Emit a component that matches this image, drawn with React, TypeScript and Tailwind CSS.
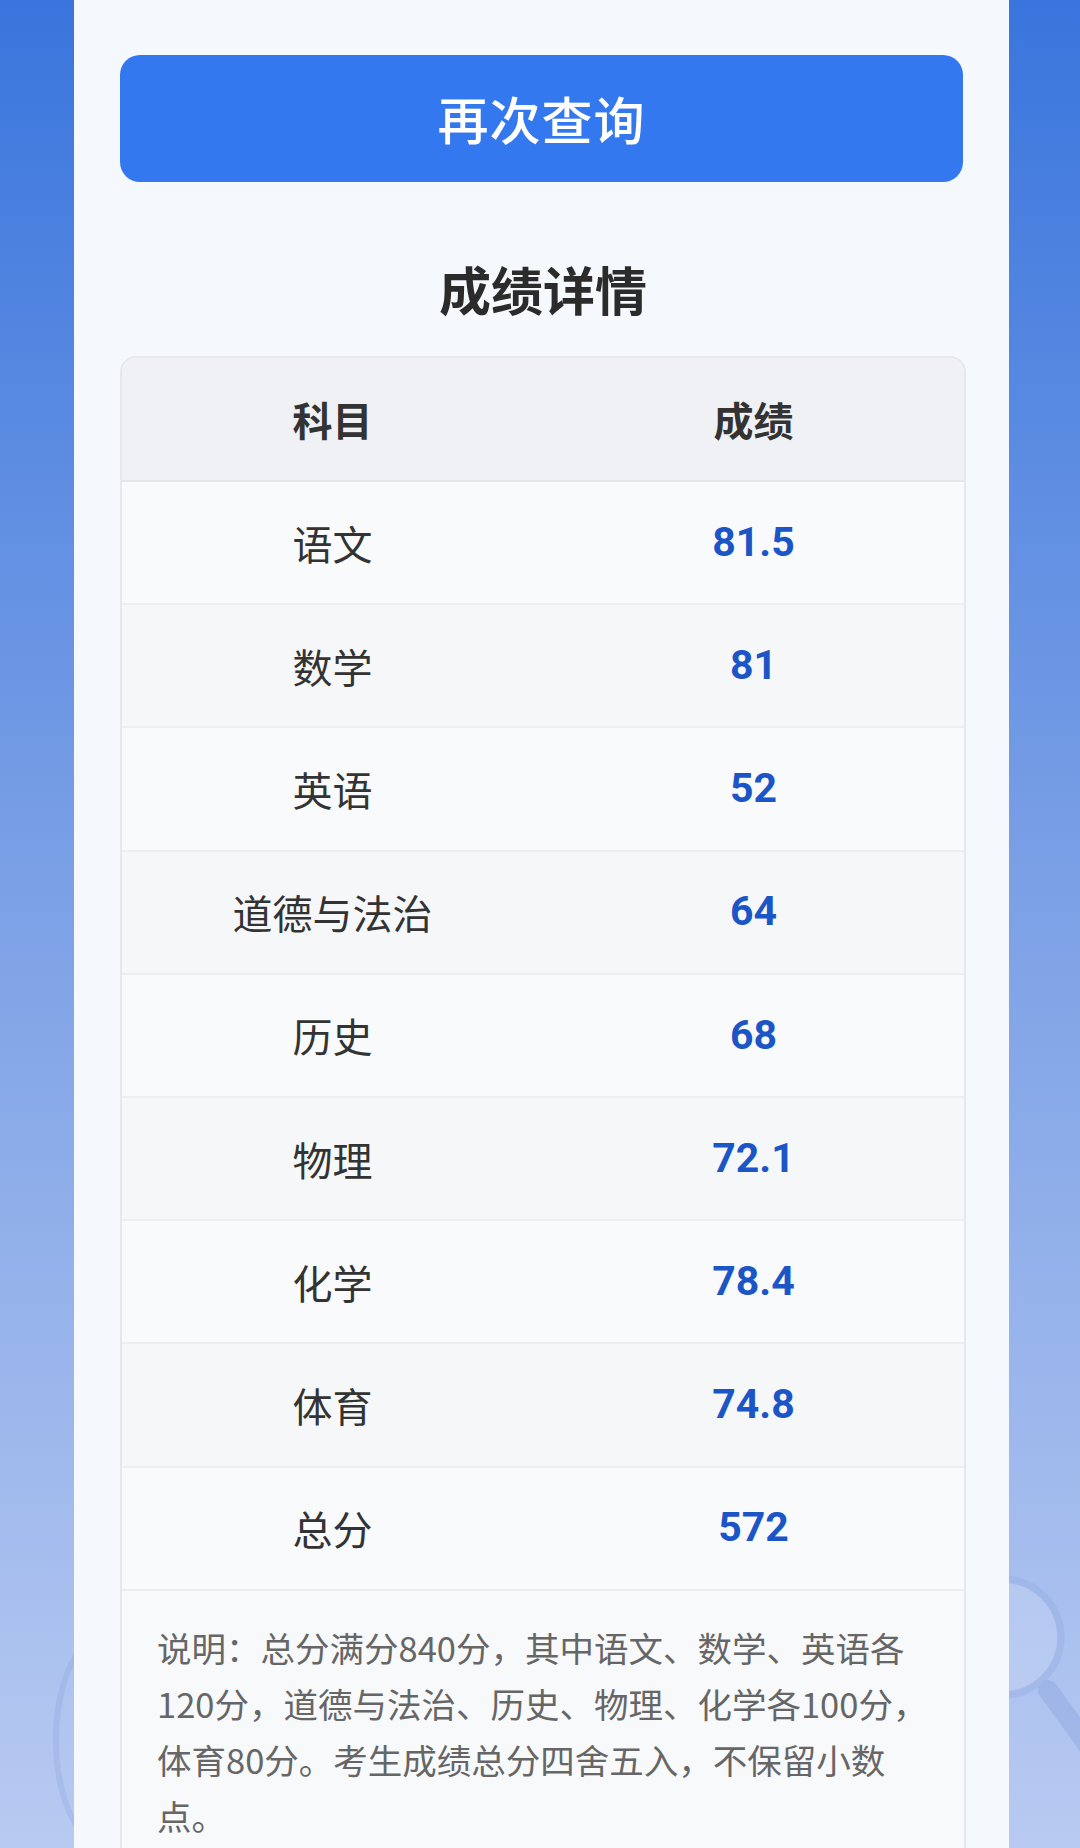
import React from "react";

type Score = { subject: string; score: string };

const scores: Score[] = [
  { subject: "语文", score: "81.5" },
  { subject: "数学", score: "81" },
  { subject: "英语", score: "52" },
  { subject: "道德与法治", score: "64" },
  { subject: "历史", score: "68" },
  { subject: "物理", score: "72.1" },
  { subject: "化学", score: "78.4" },
  { subject: "体育", score: "74.8" },
  { subject: "总分", score: "572" },
];

const App = () => {
  return (
    <div className="relative h-[1848px] w-[1080px] overflow-hidden bg-linear-to-b from-[#3975dd] via-[#7ea2e6] to-[#b8caf1] font-['Noto_Sans_CJK_SC','Noto_Sans',sans-serif]">
      {/* faint magnifier behind the card */}
      <svg
        className="absolute left-[930px] top-[1560px] opacity-30"
        width="150"
        height="220"
        viewBox="0 0 150 220"
        fill="none"
      >
        <circle cx="73" cy="77" r="58" stroke="#8ea5de" strokeWidth="7" />
        <circle cx="73" cy="77" r="54" fill="#d6e0f7" />
        <path d="M118 130 L165 195" stroke="#7f98d9" strokeWidth="20" strokeLinecap="round" />
      </svg>
      <svg
        className="absolute left-[40px] top-[1640px] opacity-30"
        width="60"
        height="200"
        viewBox="0 0 60 200"
        fill="none"
      >
        <path d="M40 10 C8 50 8 150 40 190" stroke="#8ea5de" strokeWidth="6" />
      </svg>

      <div className="relative ml-[74px] h-full w-[935px] bg-[#f5f8fc] pl-[46px] pr-[43px] pt-[55px]">
        <button className="flex h-[127px] w-[843px] items-center justify-center rounded-[20px] bg-[#3478ef] text-[51px] font-medium tracking-[1px] text-white">
          再次查询
        </button>

        <h2 className="mb-[32px] mt-[72px] text-center text-[52px] font-bold leading-[70px] text-[#2b2b2b]">
          成绩详情
        </h2>

        <div className="w-[846px] overflow-hidden rounded-t-[16px] border-2 border-[#e6e8ec]">
          <div className="grid h-[124px] grid-cols-2 items-center border-b-2 border-[#e3e6ea] bg-[#eff1f4] text-[40px] font-bold text-[#333333]">
            <div className="text-center">科目</div>
            <div className="text-center">成绩</div>
          </div>

          {scores.map((row, i) => (
            <div
              key={row.subject}
              className={
                i % 2 === 0
                  ? "grid h-[123.2px] grid-cols-2 items-center border-b-2 border-[#eceef1] bg-[#f8fafc]"
                  : "grid h-[123.2px] grid-cols-2 items-center border-b-2 border-[#eceef1] bg-[#f6f7f9]"
              }
            >
              <div className="text-center text-[40px] text-[#333333]">{row.subject}</div>
              <div className="text-center font-['Roboto','Noto_Sans_CJK_SC',sans-serif] text-[41px] font-bold text-[#1c56c6]">
                {row.score}
              </div>
            </div>
          ))}

          <div className="whitespace-nowrap bg-[#f8f9fb] pb-[40px] pl-[35px] pr-[10px] pt-[28px] text-[34.5px] leading-[56px] text-[#666666]">
            说明：总分满分840分，其中语文、数学、英语各
            <br />
            120分，道德与法治、历史、物理、化学各100分，
            <br />
            体育80分。考生成绩总分四舍五入，不保留小数
            <br />
            点。
          </div>
        </div>
      </div>
    </div>
  );
};

export default App;
